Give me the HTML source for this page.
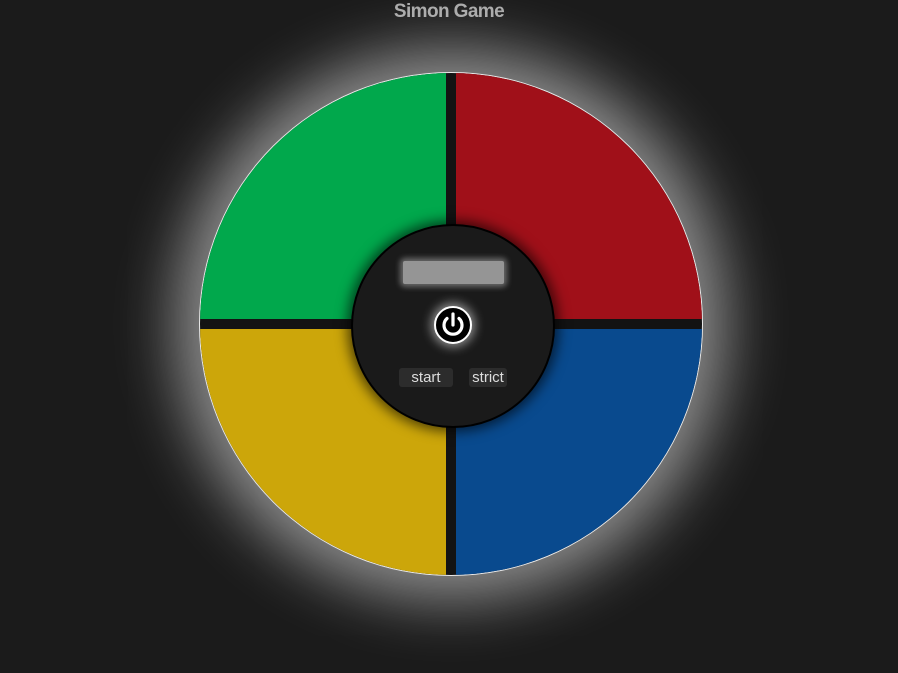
<!DOCTYPE html>
<html><head><style>
html,body{margin:0;width:898px;height:673px;background:#1b1b1b;overflow:hidden;font-family:"Liberation Sans",sans-serif}
h1{position:absolute;top:1px;left:0;width:898px;text-align:center;margin:0;font-size:19px;line-height:22px;color:#a9a9a9;font-weight:bold;letter-spacing:-0.6px}
.board{position:absolute;left:200px;top:73px;width:502px;height:502px;border-radius:50%;background:#131313;overflow:hidden;box-shadow:0 0 60px 25px rgba(255,255,255,.5),0 0 0 1px #ddd}
.q{position:absolute;width:246px;height:246px}
.g{left:0;top:0;background:#01a84c}
.r{left:256px;top:0;background:#a01019}
.y{left:0;top:256px;background:#cca60a}
.b{left:256px;top:256px;background:#094a8e}
.c{position:absolute;left:351px;top:224px;width:200px;height:200px;border-radius:50%;background:#1a1a1a;border:2px solid #000;box-shadow:0 0 12px 4px rgba(0,0,0,.6)}
.disp{position:absolute;left:50px;top:35px;width:101px;height:23px;background:#959595;box-shadow:0 0 6px 3px rgba(255,255,255,.35);border-radius:2px}
.pw{position:absolute;left:81px;top:80px;width:38px;height:38px;border-radius:50%;background:#000;border:2px solid #fff;box-sizing:border-box;box-shadow:0 0 10px 3px rgba(255,255,255,.5)}
.btn{position:absolute;top:142px;height:19px;background:#2c2c2c;border-radius:3px;color:#ddd;font-size:15px;line-height:19px;text-align:center}
</style></head><body>
<h1>Simon Game</h1>
<div class="board"><div class="q g"></div><div class="q r"></div><div class="q y"></div><div class="q b"></div></div>
<div class="c">
<div class="disp"></div>
<div class="pw"><svg width="34" height="34" viewBox="0 0 34 34"><path d="M11 10.5 A9 9 0 1 0 23 10.5" fill="none" stroke="#fff" stroke-width="3.2" stroke-linecap="round"/><line x1="17" y1="6" x2="17" y2="17" stroke="#fff" stroke-width="3.2" stroke-linecap="round"/></svg></div>
<div class="btn" style="left:46px;width:54px">start</div>
<div class="btn" style="left:116px;width:38px">strict</div>
</div>
</body></html>
